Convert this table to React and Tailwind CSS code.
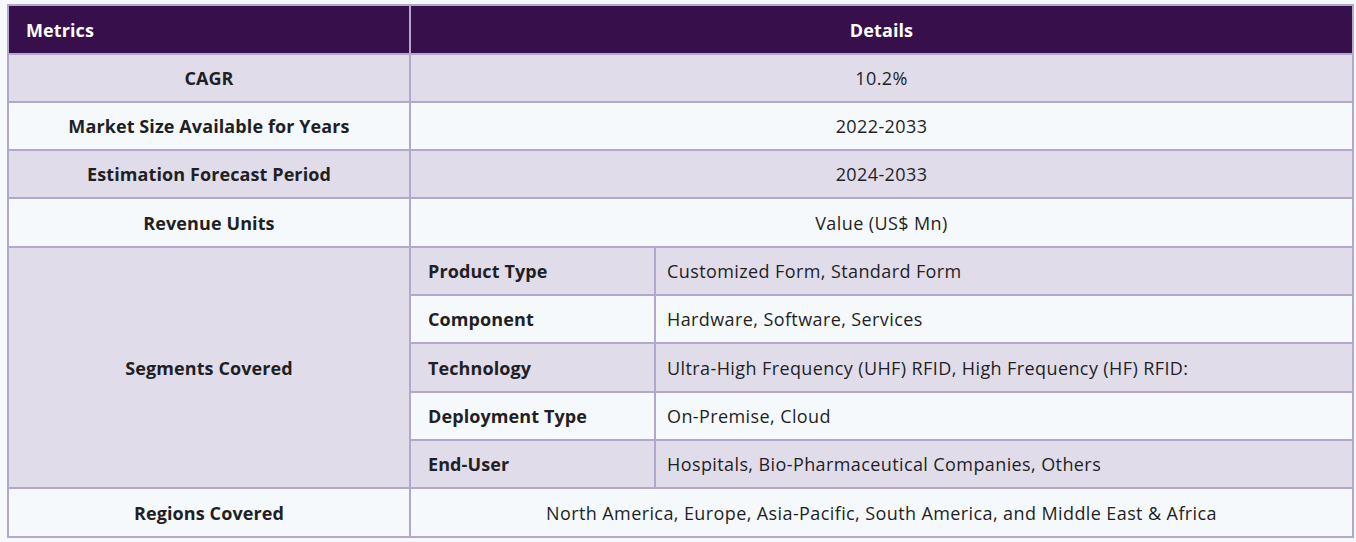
const rows = [
  { metric: "CAGR", detail: "10.2%", h: "h-[48px]" },
  { metric: "Market Size Available for Years", detail: "2022-2033", h: "h-[48px]" },
  { metric: "Estimation Forecast Period", detail: "2024-2033", h: "h-[48px]" },
  { metric: "Revenue Units", detail: "Value (US$ Mn)", h: "h-[49px]" },
];

const segments = [
  { name: "Product Type", value: "Customized Form, Standard Form", h: "h-[48px]" },
  { name: "Component", value: "Hardware, Software, Services", h: "h-[48px]" },
  { name: "Technology", value: "Ultra-High Frequency (UHF) RFID, High Frequency (HF) RFID:", h: "h-[49px]" },
  { name: "Deployment Type", value: "On-Premise, Cloud", h: "h-[48px]" },
  { name: "End-User", value: "Hospitals, Bio-Pharmaceutical Companies, Others", h: "h-[48px]" },
];

const lav = "bg-[#e0dcea]";
const light = "bg-[#f5f9fc]";
const cell = "border-2 border-[#b3a7cb] text-[18px] text-[#1f1f24] leading-none";
const bold = "font-bold tracking-[0.1px]";
const reg = "font-normal tracking-[0.4px]";

export default function App() {
  return (
    <div className="min-h-[542px] bg-[#f5f9fc] pt-[4px] pl-[7px] pr-[2px] font-['Open_Sans',sans-serif]">
      <table className="w-[1347px] border-collapse table-fixed">
        <colgroup>
          <col className="w-[402px]" />
          <col className="w-[245px]" />
          <col />
        </colgroup>
        <thead>
          <tr className="bg-[#37104b] text-white h-[49px]">
            <th className={`${cell} ${bold} text-white text-left pl-[17px]`}>Metrics</th>
            <th colSpan={2} className={`${cell} ${bold} text-white text-center`}>Details</th>
          </tr>
        </thead>
        <tbody>
          {rows.map((r, i) => (
            <tr key={r.metric} className={`${i % 2 === 0 ? lav : light} ${r.h}`}>
              <td className={`${cell} ${bold} text-center`}>{r.metric}</td>
              <td colSpan={2} className={`${cell} ${reg} text-center`}>{r.detail}</td>
            </tr>
          ))}
          {segments.map((s, i) => (
            <tr key={s.name} className={`${i % 2 === 0 ? lav : light} ${s.h}`}>
              {i === 0 && (
                <td rowSpan={5} className={`${cell} ${bold} ${lav} text-center`}>Segments Covered</td>
              )}
              <td className={`${cell} ${bold} text-left pl-[17px]`}>{s.name}</td>
              <td className={`${cell} ${reg} text-left pl-[11px]`}>{s.value}</td>
            </tr>
          ))}
          <tr className={`${light} h-[49px]`}>
            <td className={`${cell} ${bold} text-center`}>Regions Covered</td>
            <td colSpan={2} className={`${cell} ${reg} text-center`}>
              North America, Europe, Asia-Pacific, South America, and Middle East &amp; Africa
            </td>
          </tr>
        </tbody>
      </table>
    </div>
  );
}
